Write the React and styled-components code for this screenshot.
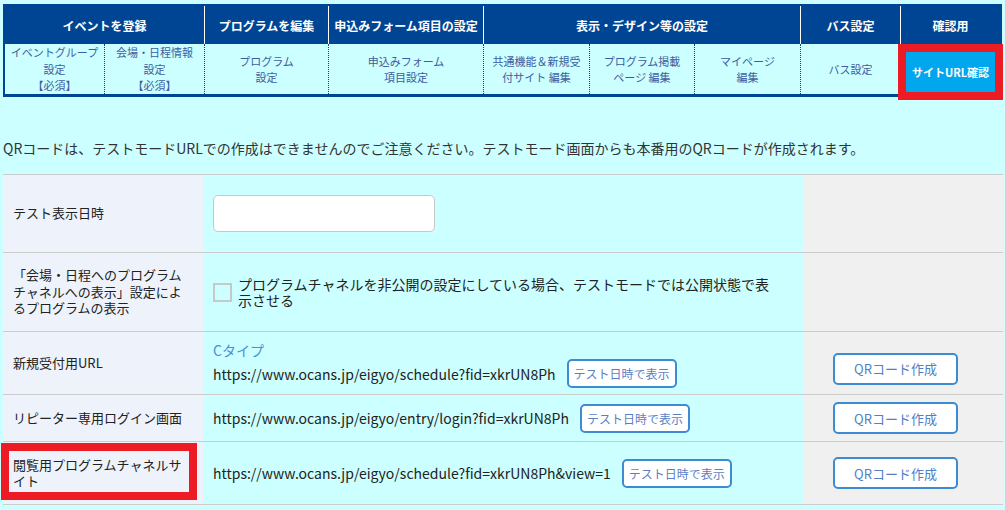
import React from "react";
import styled, { createGlobalStyle, css } from "styled-components";

const GlobalStyle = createGlobalStyle`
  html, body { margin: 0; padding: 0; background: #ccffff; }
  body {
    font-family: "Noto Sans CJK JP", "Noto Sans", sans-serif;
    color: #222;
  }
  *, *::before, *::after { box-sizing: border-box; }
`;

const Page = styled.div`
  width: 1005px;
  padding: 4px 0 0 3px;
`;

const Nav = styled.div`
  display: grid;
  grid-template-columns: 99px 100px 124px 155px 106px 105px 106px 100px 100px;
  grid-template-rows: 38px 50px;
  width: fit-content;
  border: 2px solid #004594;
  border-bottom-width: 3px;
`;

const HeadCell = styled.div`
  grid-column: span ${(p) => p.$span || 1};
  background: #004594;
  color: #fff;
  font-weight: bold;
  font-size: 12px;
  display: flex;
  align-items: center;
  justify-content: center;
  white-space: nowrap;
  border-left: ${(p) => (p.$first ? "none" : "1px solid #fff")};
`;

const SubCell = styled.div`
  color: #3f5c9d;
  font-size: 11px;
  line-height: 16.5px;
  text-align: center;
  display: flex;
  align-items: ${(p) => (p.$top ? "flex-start" : "center")};
  justify-content: center;
  padding-top: ${(p) => (p.$top ? "8px" : "0")};
  border-left: ${(p) => (p.$first ? "none" : "1px dotted #004594")};
`;

const SiteButton = styled.button`
  width: 89px;
  height: 40px;
  border: none;
  background: #00a7ee;
  color: #fff;
  font-family: inherit;
  font-weight: bold;
  font-size: 11px;
  padding: 0;
  outline: 8px solid #ed1c24;
`;

const Notice = styled.p`
  margin: 41px 0 0;
  font-size: 14px;
  line-height: 20px;
  color: #333;
`;

const Table = styled.div`
  margin-top: 16px;
  width: 1000px;
  border-bottom: 1px solid #ccc;
`;

const Row = styled.div`
  display: grid;
  grid-template-columns: 200px 600px 200px;
  min-height: ${(p) => p.$h}px;
  border-top: 1px solid #ccc;
`;

const LabelCell = styled.div`
  position: relative;
  background: #eef2fa;
  padding: 0 10px;
  font-size: 13px;
  line-height: 16.5px;
  color: #222;
  display: flex;
  align-items: center;
  ${(p) =>
    p.$marked &&
    css`
      &::after {
        content: "";
        position: absolute;
        left: -2px;
        top: 1px;
        width: 196px;
        height: 57px;
        border: 8px solid #ed1c24;
        box-sizing: border-box;
      }
    `}
`;

const ContentCell = styled.div`
  padding: 0 10px;
  font-size: 14px;
  color: #222;
  display: flex;
  flex-direction: column;
  justify-content: center;
  align-items: flex-start;
`;

const ActionCell = styled.div`
  background: #f0f0f0;
  padding-left: 30px;
  display: flex;
  align-items: center;
`;

const DateInput = styled.input`
  width: 222px;
  height: 37px;
  border: 1px solid #c8c8c8;
  border-radius: 5px;
  background: #fff;
`;

const CheckLine = styled.label`
  display: flex;
  align-items: center;
`;

const CheckBox = styled.span`
  flex: none;
  width: 19px;
  height: 19px;
  border: 2px solid #c8c8c8;
`;

const CheckText = styled.span`
  margin-left: 6px;
  max-width: 536px;
  font-size: 14px;
  line-height: 16px;
`;

const TypeLabel = styled.div`
  color: #4a90d9;
  font-size: 14px;
  line-height: 18px;
  margin-top: 3px;
`;

const UrlLine = styled.div`
  display: flex;
  align-items: center;
  gap: 11px;
  font-size: 14px;
`;

const SmallButton = styled.button`
  height: 29px;
  padding: 0 5px;
  border: 2px solid #3d8bd3;
  border-radius: 5px;
  background: #fff;
  color: #5b7fc4;
  font-family: inherit;
  font-size: 12px;
`;

const QrButton = styled.button`
  width: 125px;
  height: 32px;
  border: 2.5px solid #3d8bd3;
  border-radius: 5px;
  background: #fff;
  color: #4f80c8;
  font-family: inherit;
  font-size: 13px;
  margin-top: ${(p) => p.$shift || 0}px;
`;

export default function App() {
  return (
    <>
      <GlobalStyle />
      <Page>
        <Nav>
          <HeadCell $span={2} $first>イベントを登録</HeadCell>
          <HeadCell>プログラムを編集</HeadCell>
          <HeadCell>申込みフォーム項目の設定</HeadCell>
          <HeadCell $span={3}>表示・デザイン等の設定</HeadCell>
          <HeadCell>バス設定</HeadCell>
          <HeadCell>確認用</HeadCell>

          <SubCell $first>
            イベントグループ<br />設定<br />【必須】
          </SubCell>
          <SubCell>
            会場・日程情報<br />設定<br />【必須】
          </SubCell>
          <SubCell>
            プログラム<br />設定
          </SubCell>
          <SubCell>
            申込みフォーム<br />項目設定
          </SubCell>
          <SubCell>
            共通機能＆新規受<br />付サイト 編集
          </SubCell>
          <SubCell>
            プログラム掲載<br />ページ 編集
          </SubCell>
          <SubCell>
            マイページ<br />編集
          </SubCell>
          <SubCell>バス設定</SubCell>
          <SubCell $top>
            <SiteButton>サイトURL確認</SiteButton>
          </SubCell>
        </Nav>

        <Notice>
          QRコードは、テストモードURLでの作成はできませんのでご注意ください。テストモード画面からも本番用のQRコードが作成されます。
        </Notice>

        <Table>
          <Row $h={78}>
            <LabelCell>テスト表示日時</LabelCell>
            <ContentCell>
              <DateInput type="text" />
            </ContentCell>
            <ActionCell />
          </Row>
          <Row $h={79}>
            <LabelCell>「会場・日程へのプログラムチャネルへの表示」設定によるプログラムの表示</LabelCell>
            <ContentCell>
              <CheckLine>
                <CheckBox />
                <CheckText>
                  プログラムチャネルを非公開の設定にしている場合、テストモードでは公開状態で表示させる
                </CheckText>
              </CheckLine>
            </ContentCell>
            <ActionCell />
          </Row>
          <Row $h={63}>
            <LabelCell>新規受付用URL</LabelCell>
            <ContentCell>
              <TypeLabel>Cタイプ</TypeLabel>
              <UrlLine>
                https://www.ocans.jp/eigyo/schedule?fid=xkrUN8Ph
                <SmallButton>テスト日時で表示</SmallButton>
              </UrlLine>
            </ContentCell>
            <ActionCell>
              <QrButton $shift={11}>QRコード作成</QrButton>
            </ActionCell>
          </Row>
          <Row $h={47}>
            <LabelCell>リピーター専用ログイン画面</LabelCell>
            <ContentCell>
              <UrlLine>
                https://www.ocans.jp/eigyo/entry/login?fid=xkrUN8Ph
                <SmallButton>テスト日時で表示</SmallButton>
              </UrlLine>
            </ContentCell>
            <ActionCell>
              <QrButton>QRコード作成</QrButton>
            </ActionCell>
          </Row>
          <Row $h={63}>
            <LabelCell $marked>閲覧用プログラムチャネルサイト</LabelCell>
            <ContentCell>
              <UrlLine>
                https://www.ocans.jp/eigyo/schedule?fid=xkrUN8Ph&amp;view=1
                <SmallButton>テスト日時で表示</SmallButton>
              </UrlLine>
            </ContentCell>
            <ActionCell>
              <QrButton>QRコード作成</QrButton>
            </ActionCell>
          </Row>
        </Table>
      </Page>
    </>
  );
}
